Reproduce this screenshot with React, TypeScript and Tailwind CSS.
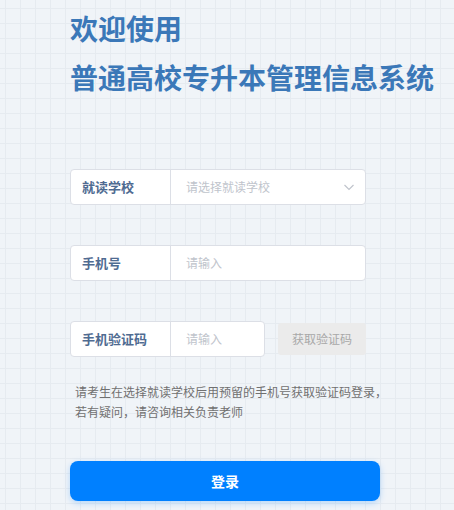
import React from 'react';

const font = { fontFamily: '"Noto Sans CJK SC", "Noto Sans", sans-serif' };

const App: React.FC = () => {
  return (
    <div
      className="w-[454px] h-[510px] overflow-hidden bg-[#f0f4f8] bg-[linear-gradient(to_right,#e6ebf0_1px,transparent_1px),linear-gradient(to_bottom,#e6ebf0_1px,transparent_1px)] bg-[size:15px_15px] bg-[position:5px_8px]"
      style={font}
    >
      <div className="pl-[70px] pt-[10px]">
        {/* Title */}
        <h1 className="text-[28px] leading-[36px] font-bold text-[#3b78b8]">欢迎使用</h1>
        <h1 className="mt-[13px] text-[28px] leading-[36px] font-bold text-[#3b78b8]">
          普通高校专升本管理信息系统
        </h1>

        {/* Form */}
        <div className="mt-[74px] w-[296px]">
          <div className="flex h-[36px] rounded-[4px] border border-[#dcdfe6] bg-white">
            <div className="w-[100px] border-r border-[#dcdfe6] flex items-center pl-[11px] text-[13px] font-bold text-[#4f6b91]">
              就读学校
            </div>
            <div className="flex-1 flex items-center justify-between pl-[15px] pr-[10px] text-[12px] text-[#c0c4cc]">
              <span>请选择就读学校</span>
              <svg width="12" height="12" viewBox="0 0 12 12" fill="none">
                <path d="M1.5 4l4.5 4.5L10.5 4" stroke="#c0c4cc" strokeWidth="1.2" />
              </svg>
            </div>
          </div>

          <div className="mt-[40px] flex h-[36px] rounded-[4px] border border-[#dcdfe6] bg-white">
            <div className="w-[100px] border-r border-[#dcdfe6] flex items-center pl-[11px] text-[13px] font-bold text-[#4f6b91]">
              手机号
            </div>
            <div className="flex-1 flex items-center pl-[15px] text-[12px] text-[#c0c4cc]">请输入</div>
          </div>

          <div className="mt-[40px] flex items-center justify-between">
            <div className="flex h-[36px] w-[195px] rounded-[4px] border border-[#dcdfe6] bg-white">
              <div className="w-[100px] border-r border-[#dcdfe6] flex items-center pl-[11px] text-[13px] font-bold text-[#4f6b91]">
                手机验证码
              </div>
              <div className="flex-1 flex items-center pl-[15px] text-[12px] text-[#c0c4cc]">请输入</div>
            </div>
            <button className="w-[88px] h-[32px] rounded-[3px] bg-[#ebebeb] text-[12px] text-[#a8a8a8]">
              获取验证码
            </button>
          </div>
        </div>

        <p className="mt-[25px] pl-[5px] text-[12px] leading-[20px] text-[#707070]">
          请考生在选择就读学校后用预留的手机号获取验证码登录，
          <br />
          若有疑问，请咨询相关负责老师
        </p>

        <button className="mt-[39px] w-[310px] h-[40px] rounded-[8px] bg-[#0080ff] text-white text-[14px] font-bold shadow-[0_2px_6px_rgba(0,128,255,0.25)]">
          登录
        </button>
      </div>
    </div>
  );
};

export default App;
